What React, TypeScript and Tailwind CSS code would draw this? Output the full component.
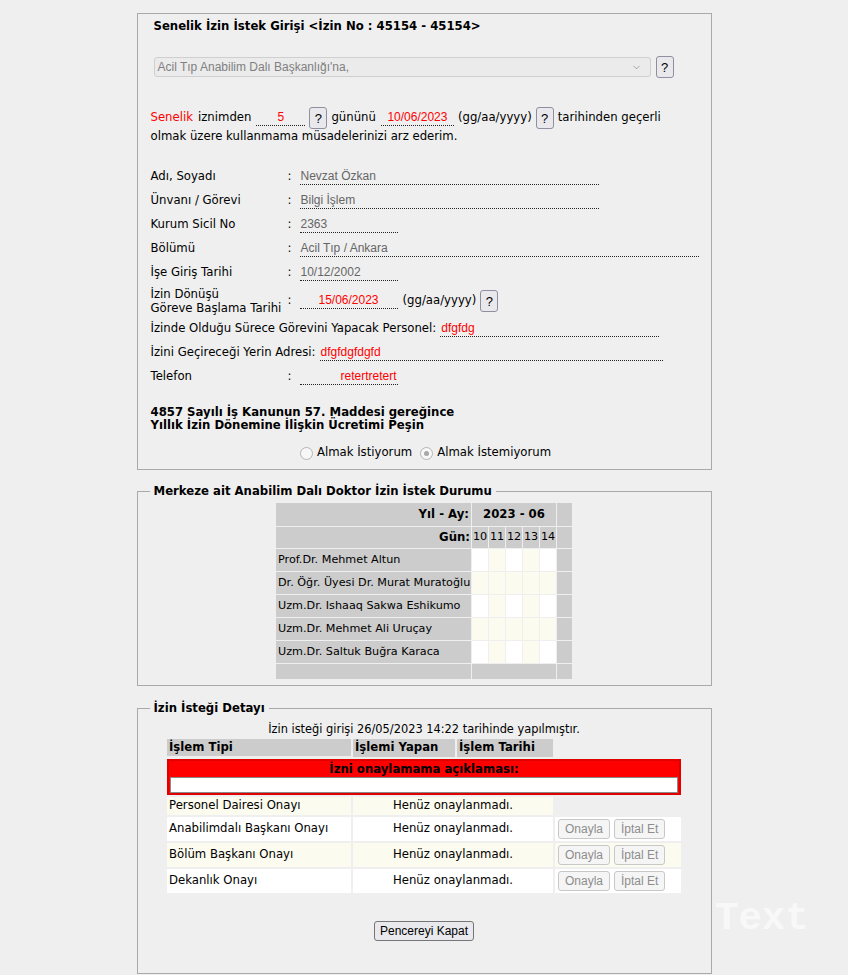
import { ChevronDown } from "lucide-react";

const valueFont = "font-['Liberation_Sans',Arial,sans-serif] text-[12px]";

function HelpButton() {
  return (
    <button className="h-[22px] w-[18px] shrink-0 rounded-[3px] border border-[#8f8f9d] bg-[#e9e9ed] font-['Liberation_Sans',Arial,sans-serif] text-[13px] leading-none text-black">
      ?
    </button>
  );
}

function Field({ className, value, red, align = "text-left" }: { className: string; value: string; red?: boolean; align?: string }) {
  return (
    <div
      className={`h-[16px] shrink-0 border-b border-dotted border-[#222] px-[1px] ${valueFont} leading-[15px] ${align} ${
        red ? "text-[#ff0000]" : "text-[#666]"
      } ${className}`}
    >
      {value}
    </div>
  );
}

function InfoRow({ label, children }: { label: React.ReactNode; children: React.ReactNode }) {
  return (
    <div className="flex h-[24px] items-center">
      <span className="w-[137px] shrink-0">{label}</span>
      <span className="w-[12px] shrink-0">:</span>
      {children}
    </div>
  );
}

function Radio({ checked }: { checked?: boolean }) {
  return (
    <span className="flex h-[13px] w-[13px] items-center justify-center rounded-full border border-[#b5b5b5] bg-[#f7f7f7]">
      {checked && <span className="h-[5px] w-[5px] rounded-full bg-[#a8a8a8]" />}
    </span>
  );
}

function SmallButton({ children }: { children: React.ReactNode }) {
  return (
    <button className="h-[20px] rounded-[3px] border border-[#c8c8c8] bg-[#f5f5f5] px-[6px] font-['Liberation_Sans',Arial,sans-serif] text-[12px] leading-none text-[#8d8d8d]">
      {children}
    </button>
  );
}

const doctors = [
  "Prof.Dr. Mehmet Altun",
  "Dr. Öğr. Üyesi Dr. Murat Muratoğlu",
  "Uzm.Dr. Ishaaq Sakwa Eshikumo",
  "Uzm.Dr. Mehmet Ali Uruçay",
  "Uzm.Dr. Saltuk Buğra Karaca",
];

const days = ["10", "11", "12", "13", "14"];

const steps = [
  { name: "Personel Dairesi Onayı", bg: "bg-[#fcfbef]", buttons: false },
  { name: "Anabilimdalı Başkanı Onayı", bg: "bg-white", buttons: true },
  { name: "Bölüm Başkanı Onayı", bg: "bg-[#fcfbef]", buttons: true },
  { name: "Dekanlık Onayı", bg: "bg-white", buttons: true },
];

export default function App() {
  return (
    <div className="relative min-h-screen bg-[#efefef] font-['DejaVu_Sans',sans-serif] text-[11.7px] text-black">
      <div className="mx-auto w-[575px] pt-[13px]">
        {/* request form */}
        <div className="flex flex-col border border-[#a9a9a9] pb-[8px] pl-[13px] pt-[5px]">
          <div className="ml-[3px] h-[14px] font-bold leading-[14px]">Senelik İzin İstek Girişi &lt;İzin No : 45154 - 45154&gt;</div>

          <div className="ml-[3px] mt-[23px] flex h-[22px] items-center gap-[5px]">
            <div className="flex h-[20px] w-[497px] items-center justify-between rounded-[3px] border border-[#cfcfcf] bg-[#ebebeb] pl-[3px] pr-[8px]">
              <span className={`${valueFont} text-[#808080]`}>Acil Tıp Anabilim Dalı Başkanlığı'na,</span>
              <ChevronDown className="h-[11px] w-[11px] text-[#888]" strokeWidth={1.5} />
            </div>
            <HelpButton />
          </div>

          <div className="mt-[29px] flex h-[22px] items-center whitespace-nowrap">
            <span className="text-[#ff0000]">Senelik</span>
            <span className="ml-[5px]">iznimden</span>
            <Field className="ml-[5px] w-[49px]" value="5" red align="text-center" />
            <span className="ml-[4px]">
              <HelpButton />
            </span>
            <span className="ml-[4px]">gününü</span>
            <Field className="ml-[5px] w-[73px]" value="10/06/2023" red align="text-center" />
            <span className="ml-[4px]">(gg/aa/yyyy)</span>
            <span className="ml-[4px]">
              <HelpButton />
            </span>
            <span className="ml-[4px]">tarihinden geçerli</span>
          </div>
          <div className="h-[14px] leading-[14px]">olmak üzere kullanmama müsadelerinizi arz ederim.</div>

          <div className="mt-[22px] flex flex-col">
            <InfoRow label="Adı, Soyadı">
              <Field className="w-[299px]" value="Nevzat Özkan" />
            </InfoRow>
            <InfoRow label="Ünvanı / Görevi">
              <Field className="w-[299px]" value="Bilgi İşlem" />
            </InfoRow>
            <InfoRow label="Kurum Sicil No">
              <Field className="w-[98px]" value="2363" />
            </InfoRow>
            <InfoRow label="Bölümü">
              <Field className="w-[399px]" value="Acil Tıp / Ankara" />
            </InfoRow>
            <InfoRow label="İşe Giriş Tarihi">
              <Field className="w-[98px]" value="10/12/2002" />
            </InfoRow>
            <div className="flex h-[32px] items-center">
              <span className="w-[137px] shrink-0 leading-[14px]">
                İzin Dönüşü
                <br />
                Göreve Başlama Tarihi
              </span>
              <span className="w-[12px] shrink-0">:</span>
              <Field className="w-[98px]" value="15/06/2023" red align="text-center" />
              <span className="ml-[5px]">(gg/aa/yyyy)</span>
              <span className="ml-[4px]">
                <HelpButton />
              </span>
            </div>
            <div className="flex h-[24px] items-center">
              <span>İzinde Olduğu Sürece Görevini Yapacak Personel:</span>
              <Field className="ml-[4px] w-[219px]" value="dfgfdg" red />
            </div>
            <div className="flex h-[24px] items-center">
              <span>İzini Geçireceği Yerin Adresi:</span>
              <Field className="ml-[4px] w-[343px]" value="dfgfdgfdgfd" red />
            </div>
            <InfoRow label="Telefon">
              <Field className="w-[98px]" value="retertretert" red align="text-right" />
            </InfoRow>
          </div>

          <div className="mt-[17px] font-bold leading-[13px]">
            4857 Sayılı İş Kanunun 57. Maddesi gereğince
            <br />
            Yıllık İzin Dönemine İlişkin Ücretimi Peşin
          </div>

          <div className="mt-[13px] flex h-[16px] items-center justify-center pr-[10px]">
            <Radio />
            <span className="ml-[4px]">Almak İstiyorum</span>
            <span className="ml-[8px]">
              <Radio checked />
            </span>
            <span className="ml-[4px]">Almak İstemiyorum</span>
          </div>
        </div>

        {/* doctor leave status */}
        <fieldset className="mt-[14px] border border-[#a9a9a9] pb-[6px]">
          <legend className="ml-[12px] px-[4px] font-bold leading-[14px]">Merkeze ait Anabilim Dalı Doktor İzin İstek Durumu</legend>
          <div className="mx-auto mt-[5px] grid w-[296px] grid-cols-[195px_16px_16px_16px_16px_16px_15px] gap-[1px] text-[11.2px]">
            <div className="flex h-[23px] items-center justify-end bg-[#cccccc] pr-[2px] text-[11.7px] font-bold">Yıl - Ay:</div>
            <div className="col-span-5 flex items-center justify-center bg-[#cccccc] text-[11.7px] font-bold">2023 - 06</div>
            <div className="bg-[#cccccc]" />

            <div className="flex h-[21px] items-center justify-end bg-[#cccccc] pr-[1px] text-[11.7px] font-bold">Gün:</div>
            {days.map((d) => (
              <div key={d} className="flex items-center justify-center bg-[#cccccc]">
                {d}
              </div>
            ))}
            <div className="bg-[#cccccc]" />

            {doctors.map((doc, i) => (
              <div key={doc} className="contents">
                <div className="flex h-[22px] items-center whitespace-nowrap bg-[#cccccc] pl-[2px]">{doc}</div>
                {days.map((d, j) => (
                  <div key={d} className={i % 2 === 0 && j % 2 === 0 ? "bg-white" : "bg-[#fcfbef]"} />
                ))}
                <div className="bg-[#cccccc]" />
              </div>
            ))}

            <div className="h-[15px] bg-[#cccccc]" />
            <div className="col-span-5 bg-[#cccccc]" />
            <div className="bg-[#cccccc]" />
          </div>
        </fieldset>

        {/* request detail */}
        <fieldset className="mt-[15px] border border-[#a9a9a9] pb-[32px]">
          <legend className="ml-[12px] px-[4px] font-bold leading-[14px]">İzin İsteği Detayı</legend>
          <div className="mt-[7px] text-center text-[11.4px] leading-[14px]">İzin isteği girişi 26/05/2023 14:22 tarihinde yapılmıştır.</div>
          <div className="mx-auto mt-[3px] grid w-[514px] grid-cols-[184px_102px_96px_126px] gap-[2px]">
            <div className="flex h-[17px] items-center bg-[#cccccc] pl-[2px] font-bold">İşlem Tipi</div>
            <div className="flex items-center bg-[#cccccc] pl-[2px] font-bold">İşlemi Yapan</div>
            <div className="flex items-center bg-[#cccccc] pl-[2px] font-bold">İşlem Tarihi</div>
            <div />

            <div className="col-span-4 flex h-[36px] flex-col items-center border-2 border-[#e00000] bg-[#ff0000] px-[1px]">
              <span className="font-bold leading-[16px]">İzni onaylamama açıklaması:</span>
              <div className="h-[19px] w-full border border-[#8a8a8a] bg-white" />
            </div>

            {steps.map((s) => (
              <div key={s.name} className="contents">
                <div className={`flex items-center pl-[2px] ${s.buttons ? "h-[24px]" : "h-[18px]"} ${s.bg}`}>{s.name}</div>
                <div className={`col-span-2 flex items-center justify-center ${s.bg}`}>Henüz onaylanmadı.</div>
                {s.buttons ? (
                  <div className={`flex items-center gap-[4px] pl-[3px] ${s.bg}`}>
                    <SmallButton>Onayla</SmallButton>
                    <SmallButton>İptal Et</SmallButton>
                  </div>
                ) : (
                  <div />
                )}
              </div>
            ))}
          </div>
          <div className="mt-[28px] flex justify-center">
            <button className="h-[20px] rounded-[3px] border border-[#767676] bg-[#e9e9ed] px-[5px] font-['Liberation_Sans',Arial,sans-serif] text-[12px] leading-none text-black">
              Pencereyi Kapat
            </button>
          </div>
        </fieldset>
      </div>

      <div className="absolute left-[715px] top-[900px] font-['Liberation_Mono',monospace] text-[39px] font-bold leading-none text-white/60">
        Text
      </div>
    </div>
  );
}
